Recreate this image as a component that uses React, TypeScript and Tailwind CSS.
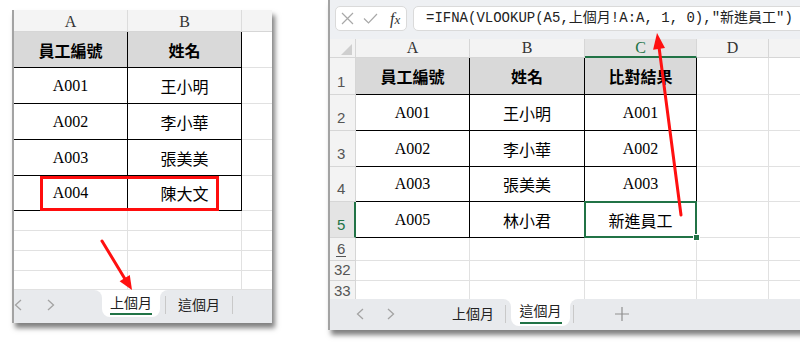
import React from "react";

const SERIF = "font-['Liberation_Serif','Noto_Sans_CJK_TC',serif]";
const CJK = "font-['Noto_Sans_CJK_TC',sans-serif]";
const MONO = "font-['Liberation_Mono','Noto_Sans_CJK_TC',monospace]";
const SANS = "font-['Liberation_Sans',sans-serif]";

function ChevL() {
  return (
    <svg width="8" height="12" viewBox="0 0 8 12">
      <polyline points="7,1 1.5,6 7,11" fill="none" stroke="#a3a3a3" strokeWidth="1.3" />
    </svg>
  );
}
function ChevR() {
  return (
    <svg width="8" height="12" viewBox="0 0 8 12">
      <polyline points="1,1 6.5,6 1,11" fill="none" stroke="#a3a3a3" strokeWidth="1.3" />
    </svg>
  );
}
function Sep() {
  return <div className="w-px h-[18px] bg-[#c9c9c9]" />;
}

const leftRows = [
  ["A001", "王小明"],
  ["A002", "李小華"],
  ["A003", "張美美"],
  ["A004", "陳大文"],
];

const rightRows = [
  ["2", "A001", "王小明", "A001"],
  ["3", "A002", "李小華", "A002"],
  ["4", "A003", "張美美", "A003"],
];

function LeftPanel() {
  return (
    <div className="relative shrink-0 mt-[10px] ml-[12px] w-[260px] h-[313px] flex flex-col bg-white border-l-2 border-[#a3a3a3] shadow-[3px_5px_5px_rgba(0,0,0,0.5)]">
      <div className={`flex h-[22px] bg-[#f4f4f4] border-b border-[#d6d6d6] text-[#333] text-[16px] ${SERIF}`}>
        <div className="w-[114px] border-r border-[#dcdcdc] flex items-center justify-center pt-[2px]">A</div>
        <div className="w-[114px] border-r border-[#dcdcdc] flex items-center justify-center pt-[2px]">B</div>
        <div className="flex-1" />
      </div>
      <div className="flex h-[36px]">
        <div className={`w-[114px] bg-[#d9d9d9] border-r border-b border-black flex items-center justify-center font-bold text-[16px] text-black ${CJK}`}>員工編號</div>
        <div className={`w-[114px] bg-[#d9d9d9] border-r border-b border-black flex items-center justify-center font-bold text-[16px] text-black ${CJK}`}>姓名</div>
        <div className="flex-1 border-b border-[#e1e1e1]" />
      </div>
      {leftRows.map((r, i) => (
        <div key={r[0]} className={`flex ${i === 3 ? "h-[35px]" : "h-[36px]"}`}>
          <div className={`w-[114px] border-r border-b border-black flex items-center justify-center text-[16px] text-black ${SERIF}`}>{r[0]}</div>
          <div className={`w-[114px] border-r border-b border-black flex items-center justify-center text-[16px] text-black ${CJK}`}>{r[1]}</div>
          <div className="flex-1 border-b border-[#e1e1e1]" />
        </div>
      ))}
      {[0, 1, 2, 3].map((i) => (
        <div key={i} className={`flex ${i === 3 ? "h-[19px]" : "h-[20px]"}`}>
          <div className="w-[114px] border-r border-b border-[#e1e1e1]" />
          <div className="w-[114px] border-r border-b border-[#e1e1e1]" />
          <div className="flex-1 border-b border-[#e1e1e1]" />
        </div>
      ))}
      <div className={`flex h-[33px] bg-white ${CJK}`}>
        <div className="w-[88px] bg-[#e8eaed] rounded-tr-[8px] flex items-center pb-[4px]">
          <span className="ml-[0px] flex"><ChevL /></span>
          <span className="ml-[25px] flex"><ChevR /></span>
        </div>
        <div className="w-[58px] bg-[#e8eaed]">
          <div className="h-[27px] bg-white rounded-b-[8px] flex flex-col items-center pt-[2px]">
            <span className="text-[14px] leading-[20px] text-[#222]">上個月</span>
            <div className="w-[42px] h-[2px] bg-[#217346] mt-[1px]" />
          </div>
        </div>
        <div className="flex-1 bg-[#e8eaed] rounded-tl-[8px] flex items-center pb-[4px]">
          <span className="ml-[5px]"><Sep /></span>
          <span className="ml-[12px] text-[14px] text-[#222]">這個月</span>
          <span className="ml-[12px]"><Sep /></span>
        </div>
      </div>
      <div className="absolute left-[26px] top-[166px] w-[179px] h-[35px] border-[3px] border-[#ff0d0d]" />
    </div>
  );
}

function RightPanel() {
  const hdr = "border-r border-b border-[#d6d6d6] flex items-center justify-center";
  const rh = `w-[26px] bg-[#f3f3f3] border-r border-b border-[#d6d6d6] text-[15px] text-[#555] ${SANS}`;
  return (
    <div className="relative shrink-0 ml-[56px] w-[480px] h-[330px] flex flex-col bg-white border-l-2 border-[#a3a3a3] shadow-[3px_5px_5px_rgba(0,0,0,0.5)]">
      <div className="h-[39px] bg-[#eef0f3] flex items-start pt-[6px] pl-[5px]">
        <div className="w-[72px] h-[25px] bg-white border border-[#dadada] rounded-[5px] flex items-center">
          <svg className="ml-[5px]" width="13" height="13" viewBox="0 0 13 13">
            <path d="M1 1 L12 12 M12 1 L1 12" stroke="#a8a8a8" strokeWidth="1.2" fill="none" />
          </svg>
          <svg className="ml-[9px]" width="15" height="11" viewBox="0 0 15 11">
            <path d="M1 5.5 L5.5 10 L14 1" stroke="#a8a8a8" strokeWidth="1.2" fill="none" />
          </svg>
          <span className="ml-[12px] font-['Liberation_Serif',serif] italic text-[16px] text-[#333] leading-none">
            f<span className="text-[13px]">x</span>
          </span>
        </div>
        <div className={`ml-[6px] flex-1 h-[25px] bg-white border border-[#dadada] rounded-[5px] flex items-center pl-[12px] text-[14px] text-[#222] whitespace-nowrap ${MONO}`}>
          =IFNA(VLOOKUP(A5,上個月!A:A, 1, 0),"新進員工")
        </div>
      </div>
      <div className={`flex h-[19px] bg-[#f3f3f3] text-[16px] text-[#333] ${SERIF}`}>
        <div className="w-[26px] border-r border-b border-[#d6d6d6] flex items-end justify-end pr-[3px] pb-[2px]">
          <svg width="11" height="11" viewBox="0 0 11 11">
            <polygon points="11,0 11,11 0,11" fill="#cfcfcf" />
          </svg>
        </div>
        <div className={`w-[114px] ${hdr}`}>A</div>
        <div className={`w-[115px] ${hdr}`}>B</div>
        <div className="w-[112px] bg-[#e4e4e4] border-r border-[#d6d6d6] border-b-2 border-b-[#217346] flex items-center justify-center text-[#217346]">C</div>
        <div className={`w-[72px] ${hdr}`}>D</div>
        <div className="flex-1 border-b border-[#d6d6d6]" />
      </div>
      <div className="flex h-[37px]">
        <div className={`${rh} flex items-end pl-[7px] pb-[1px]`}>1</div>
        <div className={`w-[114px] bg-[#d9d9d9] border-r border-b border-black flex items-center justify-center font-bold text-[16px] text-black ${CJK}`}>員工編號</div>
        <div className={`w-[115px] bg-[#d9d9d9] border-r border-b border-black flex items-center justify-center font-bold text-[16px] text-black ${CJK}`}>姓名</div>
        <div className={`w-[112px] bg-[#d9d9d9] border-r border-b border-black flex items-center justify-center font-bold text-[16px] text-black ${CJK}`}>比對結果</div>
        <div className="w-[72px] border-r border-b border-[#e1e1e1]" />
        <div className="flex-1 border-b border-[#e1e1e1]" />
      </div>
      {rightRows.map((r, i) => (
        <div key={r[0]} className={`flex ${i === 2 ? "h-[35px]" : "h-[36px]"}`}>
          <div className={`${rh} flex items-end pl-[7px] pb-[1px]`}>{r[0]}</div>
          <div className={`w-[114px] border-r border-b border-black flex items-center justify-center text-[16px] text-black ${SERIF}`}>{r[1]}</div>
          <div className={`w-[115px] border-r border-b border-black flex items-center justify-center text-[16px] text-black ${CJK}`}>{r[2]}</div>
          <div className={`w-[112px] border-r border-b border-black flex items-center justify-center text-[16px] text-black ${SERIF}`}>{r[3]}</div>
          <div className="w-[72px] border-r border-b border-[#e1e1e1]" />
          <div className="flex-1 border-b border-[#e1e1e1]" />
        </div>
      ))}
      <div className="flex h-[36px]">
        <div className={`w-[26px] bg-[#e4e4e4] border-r-2 border-r-[#217346] border-b border-b-[#d6d6d6] text-[15px] text-[#217346] ${SANS} flex items-end pl-[7px] pb-[1px]`}>5</div>
        <div className={`w-[114px] border-r border-b border-black flex items-center justify-center text-[16px] text-black ${SERIF}`}>A005</div>
        <div className={`w-[115px] border-r border-b border-black flex items-center justify-center text-[16px] text-black ${CJK}`}>林小君</div>
        <div className={`relative w-[112px] border-r border-b border-black flex items-center justify-center text-[16px] text-black ${CJK}`}>
          新進員工
          <div className="absolute -left-[1px] -top-[1px] -right-[1px] -bottom-[1px] border-2 border-[#217346]" />
          <div className="absolute -right-[4px] -bottom-[4px] w-[7px] h-[7px] bg-[#217346] border border-white" />
        </div>
        <div className="w-[72px] border-r border-b border-[#e1e1e1]" />
        <div className="flex-1 border-b border-[#e1e1e1]" />
      </div>
      <div className="flex h-[23px]">
        <div className={`${rh} flex items-center pl-[6px]`}>
          <span className="border-b border-[#555] leading-[15px] px-[1px]">6</span>
        </div>
        <div className="w-[114px] border-r border-b border-[#e1e1e1]" />
        <div className="w-[115px] border-r border-b border-[#e1e1e1]" />
        <div className="w-[112px] border-r border-b border-[#e1e1e1]" />
        <div className="w-[72px] border-r border-b border-[#e1e1e1]" />
        <div className="flex-1 border-b border-[#e1e1e1]" />
      </div>
      <div className="flex h-[20px]">
        <div className={`${rh} flex items-center pl-[4px]`}>32</div>
        <div className="w-[114px] border-r border-b border-[#e1e1e1]" />
        <div className="w-[115px] border-r border-b border-[#e1e1e1]" />
        <div className="w-[112px] border-r border-b border-[#e1e1e1]" />
        <div className="w-[72px] border-r border-b border-[#e1e1e1]" />
        <div className="flex-1 border-b border-[#e1e1e1]" />
      </div>
      <div className="flex h-[18px]">
        <div className={`w-[26px] bg-[#f3f3f3] border-r border-[#d6d6d6] text-[15px] leading-[17px] text-[#555] ${SANS} flex items-start pt-[1px] pl-[4px]`}>33</div>
        <div className="w-[114px] border-r border-[#e1e1e1]" />
        <div className="w-[115px] border-r border-[#e1e1e1]" />
        <div className="w-[112px] border-r border-[#e1e1e1]" />
        <div className="w-[72px] border-r border-[#e1e1e1]" />
        <div className="flex-1" />
      </div>
      <div className={`flex h-[31px] bg-white ${CJK}`}>
        <div className="w-[181px] bg-[#e8eaed] rounded-tr-[8px] flex items-center pb-[2px]">
          <span className="ml-[26px] flex"><ChevL /></span>
          <span className="ml-[23px] flex"><ChevR /></span>
          <span className="ml-[57px] text-[14px] text-[#222]">上個月</span>
          <span className="ml-[11px]"><Sep /></span>
        </div>
        <div className="w-[59px] bg-[#e8eaed]">
          <div className="h-[27px] bg-white rounded-b-[8px] flex flex-col items-center pt-[1px]">
            <span className="text-[14px] leading-[20px] text-[#222]">這個月</span>
            <div className="w-[42px] h-[2px] bg-[#217346] mt-[2px]" />
          </div>
        </div>
        <div className="flex-1 bg-[#e8eaed] rounded-tl-[8px] flex items-center pb-[2px]">
          <span className="ml-[3px]"><Sep /></span>
          <svg className="ml-[41px]" width="14" height="14" viewBox="0 0 14 14">
            <path d="M7 0 V14 M0 7 H14" stroke="#8f8f8f" strokeWidth="1.2" fill="none" />
          </svg>
        </div>
      </div>
    </div>
  );
}

export default function App() {
  return (
    <div className="relative w-[800px] h-[352px] bg-white overflow-hidden flex items-start">
      <LeftPanel />
      <RightPanel />
      <svg className="absolute left-0 top-0 pointer-events-none" width="800" height="352" viewBox="0 0 800 352">
        <line x1="102" y1="241" x2="125" y2="279" stroke="#ff1010" strokeWidth="3" strokeLinecap="round" />
        <polygon points="132,290 119.6,281.2 129.8,275" fill="#ff1010" />
        <line x1="681" y1="215" x2="659" y2="47" stroke="#ff1010" strokeWidth="3" strokeLinecap="round" />
        <polygon points="657,33 665,48.1 653.1,49.7" fill="#ff1010" />
      </svg>
    </div>
  );
}
